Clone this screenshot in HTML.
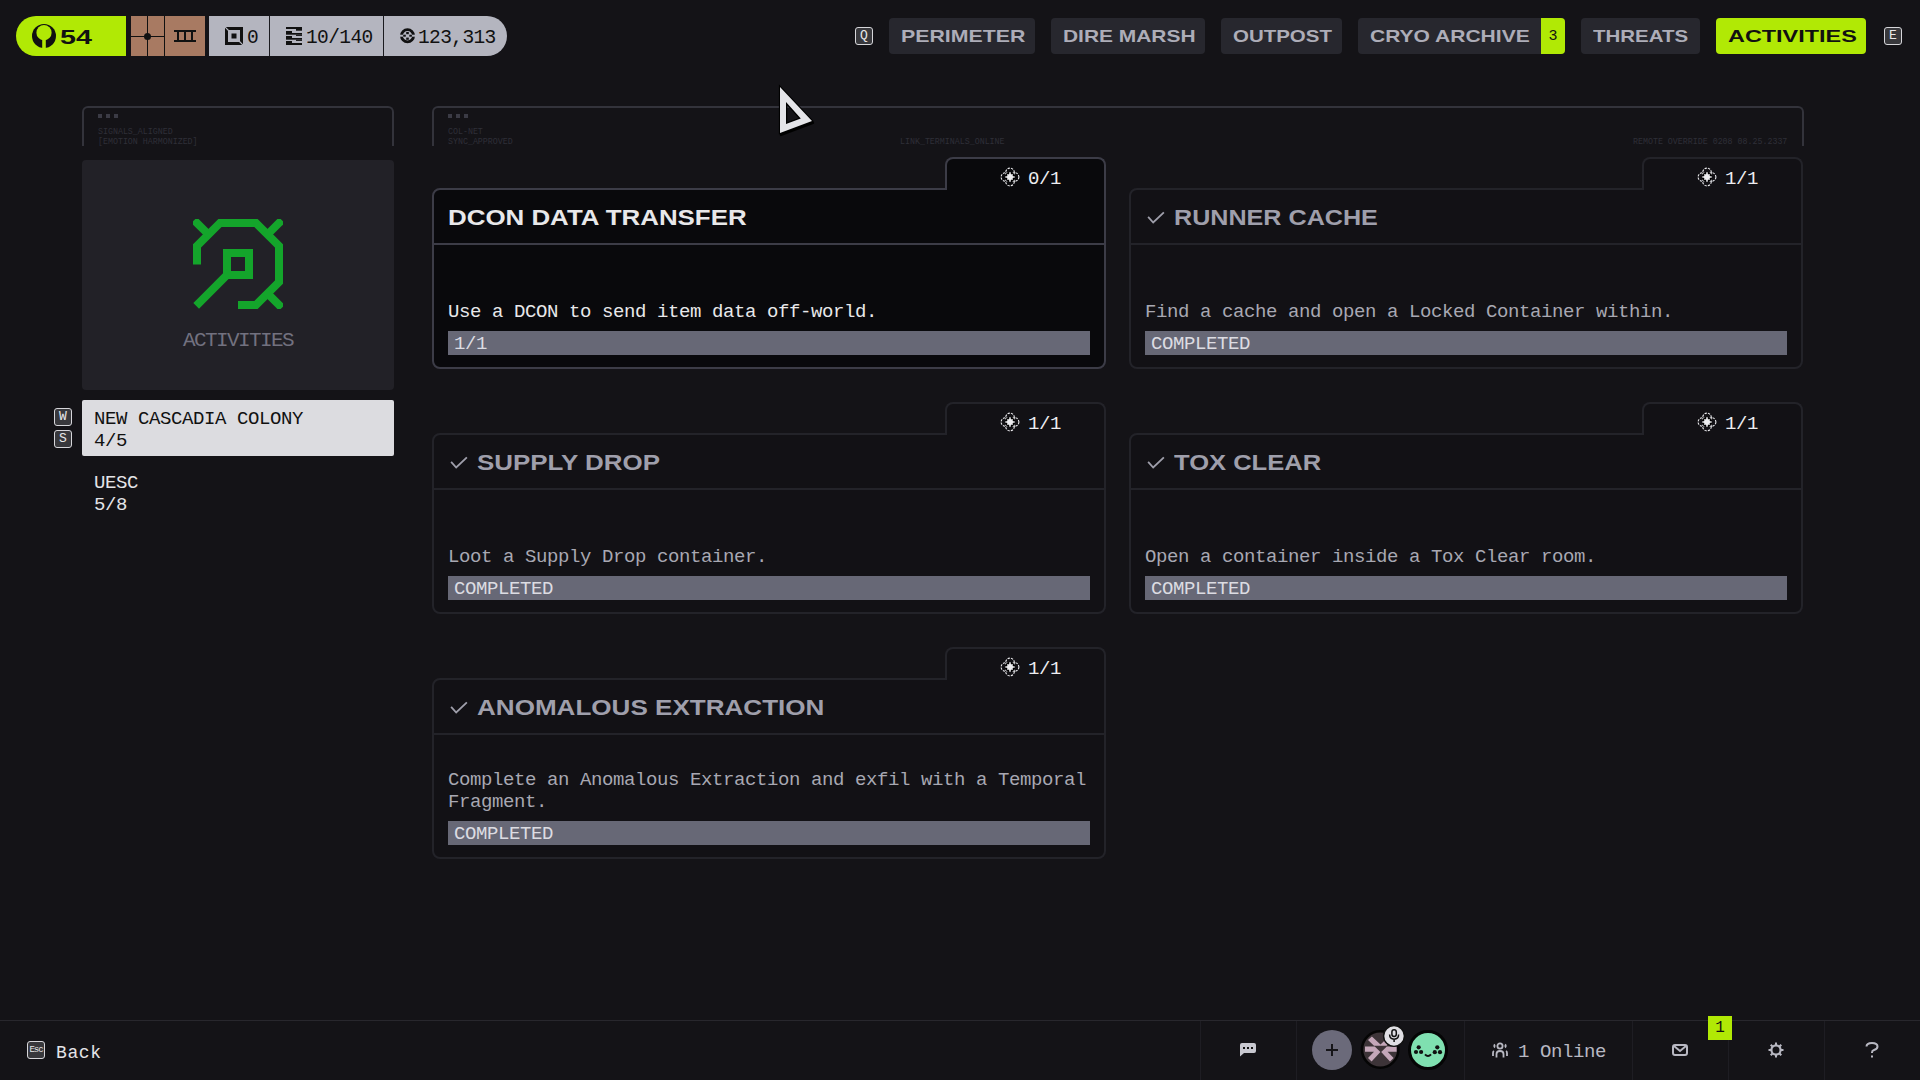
<!DOCTYPE html>
<html><head><meta charset="utf-8">
<style>
*{margin:0;padding:0;box-sizing:border-box}
html,body{width:1920px;height:1080px;overflow:hidden;background:#141317}
body{position:relative;font-family:"Liberation Mono",monospace;color:#e8e8ea}
.a{position:absolute}
.mono{font-family:"Liberation Mono",monospace}
.sans{font-family:"Liberation Sans",sans-serif;font-weight:bold}
.sx{display:inline-block;transform-origin:0 50%;white-space:pre}
/* top pill */
.pill{position:absolute;top:16px;height:40px}
/* nav tabs */
.tab{position:absolute;top:18px;height:36px;background:#27272e;border-radius:4px;color:#adadb8;font:bold 17px "Liberation Sans",sans-serif;line-height:36px;white-space:pre}
.tab span{position:absolute;top:1px}
.key{position:absolute;width:18px;height:18px;border:1.5px solid #d6d6da;border-radius:3px;background:#38383c;color:#e8e8ea;font:13px "Liberation Mono",monospace;line-height:15px;text-align:center}
/* frames */
.frame{position:absolute;top:106px;height:40px;border:2px solid #33333b;border-bottom:none;border-radius:6px 6px 0 0}
.ftxt{position:absolute;font:8.3px "Liberation Mono",monospace;color:#2f2f37;line-height:10px;white-space:pre}
.dots{position:absolute;top:114px;width:20px;height:4px;background:linear-gradient(90deg,#3b3b45 0 4px,transparent 4px 8px,#3b3b45 8px 12px,transparent 12px 16px,#3b3b45 16px 20px)}
/* cards */
.card{position:absolute;width:673.5px;height:211.5px}
.card .body{position:absolute;left:0;top:31px;width:673.5px;height:180.5px;border:2px solid #232329;border-radius:8px 0 8px 8px;background:#121115}
.card .tabr{position:absolute;right:0;top:0;width:161px;height:33px;border:2px solid #232329;border-bottom:none;border-radius:8px 8px 0 0;background:#121115}
.card .cover{position:absolute;right:2px;top:31px;width:157px;height:4px;background:#121115}
.card .hdiv{position:absolute;left:0;top:86px;width:673.5px;height:2px;background:#232329}
.card.act .body,.card.act .tabr,.card.act .cover{background:#09090c;border-color:#3c3c47}
.card.act .cover{background:#09090c}
.card.act .hdiv{background:#3c3c47}
.rew{position:absolute;top:10px;left:568px;width:20px;height:20px}
.rewt{position:absolute;top:10px;left:596px;font:19px "Liberation Mono",monospace;letter-spacing:-0.4px;color:#ededf0;line-height:20px;white-space:pre}
.ttl{position:absolute;top:53px;font:bold 21.5px "Liberation Sans",sans-serif;line-height:24px;color:#9f9fab;white-space:pre}
.card.act .ttl{color:#e8e8ea}
.chk{position:absolute;left:16px;top:54px;width:18px;height:14px}
.desc{position:absolute;left:16px;width:650px;font:19px "Liberation Mono",monospace;letter-spacing:-0.4px;line-height:22px;color:#a8a8b2;white-space:pre}
.card.act .desc{color:#e8e8ea}
.bar{position:absolute;left:16px;top:174px;width:642px;height:24px;background:#676876;color:#dcdce2;font:19px "Liberation Mono",monospace;letter-spacing:-0.4px;line-height:24px;padding-left:6px;padding-top:1px;white-space:pre}
/* bottom */
.bline{position:absolute;left:0;top:1020px;width:1920px;height:1px;background:#28272d}
.bdiv{position:absolute;top:1021px;width:1px;height:59px;background:#1e1d23}
</style></head><body>

<!-- ===== TOP LEFT PILL ===== -->
<div class="pill" style="left:16px;width:110px;background:#b1e905;border-radius:20px 0 0 20px"></div>
<svg class="a" style="left:32px;top:24px" width="24" height="24" viewBox="0 0 24 24">
  <circle cx="12" cy="12" r="12" fill="#111"/>
  <circle cx="12" cy="8.7" r="7.6" fill="#b1e905"/>
  <rect x="10.2" y="12" width="3.6" height="12.5" fill="#b1e905"/>
</svg>
<div class="a sans" style="left:60px;top:23px;font-size:20.5px;line-height:28px;color:#111"><span class="sx" style="transform:scaleX(1.40)">54</span></div>

<div class="pill" style="left:131px;width:74px;background:#a87a62"></div>
<div class="a" style="left:147px;top:16px;width:1px;height:40px;background:#111"></div>
<div class="a" style="left:131px;top:36px;width:33px;height:1px;background:#111"></div>
<div class="a" style="left:144px;top:33px;width:7px;height:7px;border-radius:50%;background:#111"></div>
<div class="a" style="left:164px;top:16px;width:1px;height:40px;background:#111"></div>
<svg class="a" style="left:174px;top:30px" width="22" height="12" viewBox="0 0 22 12">
  <rect x="0" y="0" width="22" height="2" fill="#111"/><rect x="0" y="10" width="22" height="2" fill="#111"/>
  <rect x="3" y="1" width="2" height="10" fill="#111"/><rect x="10" y="1" width="2" height="10" fill="#111"/><rect x="17" y="1" width="2" height="10" fill="#111"/>
</svg>

<div class="pill" style="left:209px;width:298px;background:#b4b5bf;border-radius:0 20px 20px 0"></div>
<div class="a" style="left:269px;top:16px;width:1px;height:40px;background:#1a1a1f"></div>
<div class="a" style="left:383px;top:16px;width:1px;height:40px;background:#1a1a1f"></div>
<svg class="a" style="left:225px;top:27px" width="18" height="18" viewBox="0 0 18 18">
  <path d="M0,0 H18 V18 H0z M3,3 V15 H15 V3z" fill="#111" fill-rule="evenodd"/>
  <rect x="6.5" y="6.5" width="5" height="5" fill="#111"/>
  <path d="M0,0 L3.5,3.5 M18,18 L14.5,14.5" stroke="#b4b5bf" stroke-width="1.2"/>
</svg>
<div class="a mono" style="left:247px;top:26.7px;font-size:19.5px;letter-spacing:-0.6px;line-height:22px;color:#111">0</div>
<svg class="a" style="left:286px;top:27px" width="16" height="18" viewBox="0 0 16 18">
  <g fill="#111">
  <rect x="0" y="0" width="16" height="2"/><rect x="10" y="2" width="6" height="1.7"/>
  <rect x="0" y="4" width="6" height="2"/><rect x="0" y="6" width="16" height="1.7"/><rect x="10" y="7.7" width="6" height="1.2"/>
  <rect x="0" y="9" width="6" height="2"/><rect x="0" y="11" width="16" height="1.7"/><rect x="10" y="12.7" width="6" height="1.2"/>
  <rect x="0" y="14" width="6" height="2"/><rect x="0" y="16" width="16" height="2"/>
  </g>
</svg>
<div class="a mono" style="left:306px;top:26.7px;font-size:19.5px;letter-spacing:-0.6px;line-height:22px;color:#111">10/140</div>
<svg class="a" style="left:399px;top:26px" width="18" height="20" viewBox="0 0 18 20">
  <circle cx="8.5" cy="9.7" r="6.1" fill="none" stroke="#111" stroke-width="2.8"/>
  <rect x="0" y="8.7" width="18" height="2" fill="#b4b5bf"/>
  <g fill="#111"><rect x="7.2" y="6" width="2.6" height="2.2"/><rect x="4.2" y="8.7" width="2.6" height="2"/><rect x="10.3" y="8.7" width="2.6" height="2"/><rect x="7.2" y="11.6" width="2.6" height="2.2"/></g>
</svg>
<div class="a mono" style="left:418px;top:26.7px;font-size:19.5px;letter-spacing:-0.6px;line-height:22px;color:#111">123,313</div>

<!-- ===== NAV TABS ===== -->
<div class="key" style="left:855px;top:27px">Q</div>
<div class="tab" style="left:889px;width:146px"><span style="left:12px;transform:scaleX(1.253)" class="sx">PERIMETER</span></div>
<div class="tab" style="left:1051px;width:154px"><span style="left:12px;transform:scaleX(1.231)" class="sx">DIRE MARSH</span></div>
<div class="tab" style="left:1221px;width:121px"><span style="left:12px;transform:scaleX(1.204)" class="sx">OUTPOST</span></div>
<div class="tab" style="left:1358px;width:207px"><span style="left:12px;transform:scaleX(1.237)" class="sx">CRYO ARCHIVE</span>
  <div class="a" style="left:183px;top:0;width:24px;height:36px;background:#b1e905;border-radius:0 4px 4px 0;color:#111;font:15px 'Liberation Mono',monospace;line-height:38px;text-align:center">3</div></div>
<div class="tab" style="left:1581px;width:119px"><span style="left:12px;transform:scaleX(1.204)" class="sx">THREATS</span></div>
<div class="tab" style="left:1716px;width:150px;background:#b1e905;color:#111"><span style="left:12px;transform:scaleX(1.377)" class="sx">ACTIVITIES</span></div>
<div class="key" style="left:1884px;top:27px">E</div>


<!-- ===== FRAMES ===== -->
<div class="frame" style="left:82px;width:312px"></div>
<div class="dots" style="left:98px"></div>
<div class="ftxt" style="left:98px;top:127px">SIGNALS_ALIGNED
[EMOTION HARMONIZED]</div>
<div class="frame" style="left:432px;width:1372px"></div>
<div class="dots" style="left:448px"></div>
<div class="ftxt" style="left:448px;top:127px">COL-NET
SYNC_APPROVED</div>
<div class="ftxt" style="left:900px;top:137px">LINK_TERMINALS_ONLINE</div>
<div class="ftxt" style="left:1633px;top:137px">REMOTE OVERRIDE 0208 08.25.2337</div>

<!-- ===== SIDEBAR ===== -->
<div class="a" style="left:82px;top:160px;width:312px;height:230px;background:#222127;border-radius:4px"></div>
<svg class="a" style="left:193px;top:219px" width="90" height="90" viewBox="0 0 90 90">
  <g fill="none" stroke="#14a52b" stroke-width="8" stroke-linecap="square" stroke-linejoin="miter">
    <path d="M4,41.5 V27 L27,4 H63 L86,27 V63 L63,86 H49"/>
    <path d="M4,4 L15,15 M86,4 L75,15 M86,86 L75,75"/>
    <rect x="34" y="34" width="22" height="22"/>
    <path d="M34,56 L6,84"/>
  </g>
</svg>
<div class="a mono" style="left:183px;top:330px;font-size:21px;line-height:22px;letter-spacing:-1.6px;color:#72717f">ACTIVITIES</div>

<div class="key" style="left:54px;top:408px">W</div>
<div class="key" style="left:54px;top:430px">S</div>
<div class="a" style="left:82px;top:400px;width:312px;height:56px;background:#dcdce0;border-radius:2px"></div>
<div class="a mono" style="left:94px;top:408px;font-size:19px;letter-spacing:-0.4px;line-height:22px;color:#111;white-space:pre">NEW CASCADIA COLONY
4/5</div>
<div class="a mono" style="left:94px;top:472px;font-size:19px;letter-spacing:-0.4px;line-height:22px;color:#e4e4e8;white-space:pre">UESC
5/8</div>

<!-- ===== CURSOR ===== -->
<svg class="a" style="left:776px;top:84px" width="44" height="56" viewBox="0 0 44 56">
  <path d="M4,3 L36,37 L4,49z M9,16 V38 L23.8,32.6z" fill="#000" fill-rule="evenodd" stroke="#000" stroke-width="2.4" stroke-linejoin="round" transform="translate(1,2)"/>
  <path d="M4,3 L36,37 L4,49z M10,18 V40 L24.8,34.6z" fill="none" stroke="#000" stroke-width="2.2" stroke-linejoin="miter"/>
  <path d="M4,3 L36,37 L4,49z M10,18 V40 L24.8,34.6z" fill="#e4e4e8" fill-rule="evenodd"/>
</svg>

<div class="card act" style="left:432px;top:157px">
  <div class="body"></div>
  <div class="tabr"></div>
  <div class="cover"></div>
  <div class="hdiv"></div>
  <svg class="rew" width="20" height="20" viewBox="0 0 20 20" style="left:568px;top:10px">
    <g fill="none" stroke="#ededf0" stroke-width="1.1" stroke-dasharray="2.3 1.15">
      <circle cx="10" cy="5.4" r="4.3"/><circle cx="10" cy="14.6" r="4.3"/><circle cx="5.4" cy="10" r="4.3"/><circle cx="14.6" cy="10" r="4.3"/>
    </g>
    <circle cx="10" cy="10" r="5" fill="#000"/>
    <circle cx="10" cy="10" r="3" fill="#ededf0"/>
    <path d="M10,5.3 V14.7 M5.3,10 H14.7" stroke="#ededf0" stroke-width="1.6"/>
    <path d="M7.4,7.4 L12.6,12.6 M12.6,7.4 L7.4,12.6" stroke="#ededf0" stroke-width="1.2"/>
  </svg>
  <div class="rewt" style="top:12px">0/1</div>
  
  <div class="ttl" style="left:15.5px;top:48.5px"><span class="sx" style="transform:scaleX(1.204)">DCON DATA TRANSFER</span></div>
  <div class="desc" style="top:144px">Use a DCON to send item data off-world.</div>
  <div class="bar">1/1</div>
</div>
<div class="card" style="left:1129px;top:157px">
  <div class="body"></div>
  <div class="tabr"></div>
  <div class="cover"></div>
  <div class="hdiv"></div>
  <svg class="rew" width="20" height="20" viewBox="0 0 20 20" style="left:568px;top:10px">
    <g fill="none" stroke="#ededf0" stroke-width="1.1" stroke-dasharray="2.3 1.15">
      <circle cx="10" cy="5.4" r="4.3"/><circle cx="10" cy="14.6" r="4.3"/><circle cx="5.4" cy="10" r="4.3"/><circle cx="14.6" cy="10" r="4.3"/>
    </g>
    <circle cx="10" cy="10" r="5" fill="#000"/>
    <circle cx="10" cy="10" r="3" fill="#ededf0"/>
    <path d="M10,5.3 V14.7 M5.3,10 H14.7" stroke="#ededf0" stroke-width="1.6"/>
    <path d="M7.4,7.4 L12.6,12.6 M12.6,7.4 L7.4,12.6" stroke="#ededf0" stroke-width="1.2"/>
  </svg>
  <div class="rewt" style="top:12px">1/1</div>
  <svg class="chk" viewBox="0 0 16 11" width="16" height="11" style="left:18px;top:54px"><path d="M1,4.5 L5.5,9.5 L15,0.5" fill="none" stroke="#9f9fab" stroke-width="1.6"/></svg>
  <div class="ttl" style="left:45px;top:48.5px"><span class="sx" style="transform:scaleX(1.169)">RUNNER CACHE</span></div>
  <div class="desc" style="top:144px">Find a cache and open a Locked Container within.</div>
  <div class="bar">COMPLETED</div>
</div>
<div class="card" style="left:432px;top:402px">
  <div class="body"></div>
  <div class="tabr"></div>
  <div class="cover"></div>
  <div class="hdiv"></div>
  <svg class="rew" width="20" height="20" viewBox="0 0 20 20" style="left:568px;top:10px">
    <g fill="none" stroke="#ededf0" stroke-width="1.1" stroke-dasharray="2.3 1.15">
      <circle cx="10" cy="5.4" r="4.3"/><circle cx="10" cy="14.6" r="4.3"/><circle cx="5.4" cy="10" r="4.3"/><circle cx="14.6" cy="10" r="4.3"/>
    </g>
    <circle cx="10" cy="10" r="5" fill="#000"/>
    <circle cx="10" cy="10" r="3" fill="#ededf0"/>
    <path d="M10,5.3 V14.7 M5.3,10 H14.7" stroke="#ededf0" stroke-width="1.6"/>
    <path d="M7.4,7.4 L12.6,12.6 M12.6,7.4 L7.4,12.6" stroke="#ededf0" stroke-width="1.2"/>
  </svg>
  <div class="rewt" style="top:12px">1/1</div>
  <svg class="chk" viewBox="0 0 16 11" width="16" height="11" style="left:18px;top:54px"><path d="M1,4.5 L5.5,9.5 L15,0.5" fill="none" stroke="#9f9fab" stroke-width="1.6"/></svg>
  <div class="ttl" style="left:45px;top:48.5px"><span class="sx" style="transform:scaleX(1.206)">SUPPLY DROP</span></div>
  <div class="desc" style="top:144px">Loot a Supply Drop container.</div>
  <div class="bar">COMPLETED</div>
</div>
<div class="card" style="left:1129px;top:402px">
  <div class="body"></div>
  <div class="tabr"></div>
  <div class="cover"></div>
  <div class="hdiv"></div>
  <svg class="rew" width="20" height="20" viewBox="0 0 20 20" style="left:568px;top:10px">
    <g fill="none" stroke="#ededf0" stroke-width="1.1" stroke-dasharray="2.3 1.15">
      <circle cx="10" cy="5.4" r="4.3"/><circle cx="10" cy="14.6" r="4.3"/><circle cx="5.4" cy="10" r="4.3"/><circle cx="14.6" cy="10" r="4.3"/>
    </g>
    <circle cx="10" cy="10" r="5" fill="#000"/>
    <circle cx="10" cy="10" r="3" fill="#ededf0"/>
    <path d="M10,5.3 V14.7 M5.3,10 H14.7" stroke="#ededf0" stroke-width="1.6"/>
    <path d="M7.4,7.4 L12.6,12.6 M12.6,7.4 L7.4,12.6" stroke="#ededf0" stroke-width="1.2"/>
  </svg>
  <div class="rewt" style="top:12px">1/1</div>
  <svg class="chk" viewBox="0 0 16 11" width="16" height="11" style="left:18px;top:54px"><path d="M1,4.5 L5.5,9.5 L15,0.5" fill="none" stroke="#9f9fab" stroke-width="1.6"/></svg>
  <div class="ttl" style="left:45px;top:48.5px"><span class="sx" style="transform:scaleX(1.188)">TOX CLEAR</span></div>
  <div class="desc" style="top:144px">Open a container inside a Tox Clear room.</div>
  <div class="bar">COMPLETED</div>
</div>
<div class="card" style="left:432px;top:647px">
  <div class="body"></div>
  <div class="tabr"></div>
  <div class="cover"></div>
  <div class="hdiv"></div>
  <svg class="rew" width="20" height="20" viewBox="0 0 20 20" style="left:568px;top:10px">
    <g fill="none" stroke="#ededf0" stroke-width="1.1" stroke-dasharray="2.3 1.15">
      <circle cx="10" cy="5.4" r="4.3"/><circle cx="10" cy="14.6" r="4.3"/><circle cx="5.4" cy="10" r="4.3"/><circle cx="14.6" cy="10" r="4.3"/>
    </g>
    <circle cx="10" cy="10" r="5" fill="#000"/>
    <circle cx="10" cy="10" r="3" fill="#ededf0"/>
    <path d="M10,5.3 V14.7 M5.3,10 H14.7" stroke="#ededf0" stroke-width="1.6"/>
    <path d="M7.4,7.4 L12.6,12.6 M12.6,7.4 L7.4,12.6" stroke="#ededf0" stroke-width="1.2"/>
  </svg>
  <div class="rewt" style="top:12px">1/1</div>
  <svg class="chk" viewBox="0 0 16 11" width="16" height="11" style="left:18px;top:54px"><path d="M1,4.5 L5.5,9.5 L15,0.5" fill="none" stroke="#9f9fab" stroke-width="1.6"/></svg>
  <div class="ttl" style="left:45px;top:48.5px"><span class="sx" style="transform:scaleX(1.212)">ANOMALOUS EXTRACTION</span></div>
  <div class="desc" style="top:122px">Complete an Anomalous Extraction and exfil with a Temporal
Fragment.</div>
  <div class="bar">COMPLETED</div>
</div>
<!-- ===== BOTTOM BAR ===== -->
<div class="bline"></div>
<div class="key" style="left:27px;top:1041px;font-size:9px;letter-spacing:-1px;line-height:16px">Esc</div>
<div class="a mono" style="left:56px;top:1042px;font-size:18px;letter-spacing:0.6px;line-height:22px;color:#e4e4e8">Back</div>
<div class="bdiv" style="left:1200px"></div>
<div class="bdiv" style="left:1296px"></div>
<div class="bdiv" style="left:1464px"></div>
<div class="bdiv" style="left:1632px"></div>
<div class="bdiv" style="left:1728px"></div>
<div class="bdiv" style="left:1824px"></div>
<svg class="a" style="left:1240px;top:1043px" width="16" height="14" viewBox="0 0 16 14">
  <path d="M2,0 H14 Q16,0 16,2 V8 Q16,10 14,10 H4 L0,13.5 V2 Q0,0 2,0z" fill="#c8c8d0"/>
  <rect x="3" y="4" width="2" height="2" fill="#111"/><rect x="7" y="4" width="2" height="2" fill="#111"/><rect x="11" y="4" width="2" height="2" fill="#111"/>
</svg>
<div class="a" style="left:1312px;top:1030px;width:40px;height:40px;border-radius:50%;background:#6b6a7a"></div>
<div class="a" style="left:1326px;top:1049px;width:12px;height:2px;background:#161519"></div>
<div class="a" style="left:1331px;top:1044px;width:2px;height:12px;background:#161519"></div>
<svg class="a" style="left:1360px;top:1030px" width="40" height="40" viewBox="0 0 40 40">
  <circle cx="20.2" cy="19.5" r="18.2" fill="#3d3438" stroke="#050505" stroke-width="2.6"/>
  <g fill="#c4a7b9">
    <path d="M5,16.5 H14.8 L20.4,22 L11.6,31.5 L8,28 L14,21.8 H5z"/>
    <path d="M36.6,16.5 H26.8 L21.2,22 L30,31.5 L33.6,28 L27.6,21.8 H36.6z"/>
    <path d="M8,10 L11.9,6.4 L20.5,14.6 L28.9,6.4 L32.6,10 L26.5,15.8 H14z"/>
  </g>
</svg>
<svg class="a" style="left:1382px;top:1024px" width="24" height="24" viewBox="0 0 24 24">
  <circle cx="12" cy="12" r="10.4" fill="#e0dfe4" stroke="#111" stroke-width="1.4"/>
  <rect x="9.9" y="5.8" width="4.4" height="6.6" rx="2.2" fill="none" stroke="#111" stroke-width="1.5"/>
  <path d="M7.6,10.6 Q7.6,15.2 12.1,15.2 Q16.6,15.2 16.6,10.6 M12.1,15.2 V18" fill="none" stroke="#111" stroke-width="1.5"/>
</svg>
<svg class="a" style="left:1408px;top:1030px" width="40" height="40" viewBox="0 0 40 40">
  <circle cx="20" cy="20" r="18.5" fill="#7fe0b0" stroke="#050505" stroke-width="3"/>
  <g fill="#111">
    <circle cx="10.7" cy="17.3" r="2.1"/><circle cx="8" cy="22" r="2.1"/><circle cx="13.1" cy="22" r="2.1"/>
    <circle cx="29.3" cy="17.3" r="2.1"/><circle cx="26.8" cy="22.2" r="2.1"/><circle cx="32" cy="22.2" r="2.1"/>
  </g>
  <path d="M17,24.3 Q20,27.8 23,24.3" fill="none" stroke="#111" stroke-width="2"/>
</svg>
<svg class="a" style="left:1492px;top:1042px" width="16" height="16" viewBox="0 0 16 16">
  <g fill="none" stroke="#b8b8c2" stroke-width="1.8">
    <circle cx="8" cy="4" r="2.6"/>
    <path d="M4.5,15.5 V12 Q4.5,9 8,9 Q11.5,9 11.5,12 V15.5"/>
    <path d="M3,2.5 Q1.5,4 3,5.5 M13,2.5 Q14.5,4 13,5.5"/>
    <path d="M1,14 V11 Q1,9.5 2,9 M15,14 V11 Q15,9.5 14,9"/>
  </g>
</svg>
<div class="a mono" style="left:1518px;top:1041px;font-size:19px;letter-spacing:-0.4px;line-height:22px;color:#b8b8c2;white-space:pre">1 Online</div>
<svg class="a" style="left:1672px;top:1044px" width="16" height="12" viewBox="0 0 16 12">
  <rect x="1" y="1" width="14" height="10" rx="2" fill="none" stroke="#b8b8c2" stroke-width="2"/>
  <path d="M2,2 L8,7 L14,2" fill="none" stroke="#b8b8c2" stroke-width="2"/>
</svg>
<div class="a" style="left:1708px;top:1016px;width:24px;height:24px;background:#b1e905;color:#111;font:16px 'Liberation Mono',monospace;line-height:24px;text-align:center">1</div>
<svg class="a" style="left:1768px;top:1042px" width="16" height="16" viewBox="0 0 16 16">
  <circle cx="8" cy="8" r="4.6" fill="none" stroke="#b8b8c2" stroke-width="2.2"/>
  <path d="M8,0.5 V3 M8,13 V15.5 M0.5,8 H3 M13,8 H15.5 M2.7,2.7 L4.5,4.5 M11.5,11.5 L13.3,13.3 M13.3,2.7 L11.5,4.5 M4.5,11.5 L2.7,13.3" stroke="#b8b8c2" stroke-width="2"/>
</svg>
<svg class="a" style="left:1865px;top:1042px" width="14" height="16" viewBox="0 0 14 16">
  <path d="M1.5,4.5 Q1.5,1 7,1 Q12.5,1 12.5,4.5 Q12.5,7 9,8 Q7,8.6 7,10.5 V11" fill="none" stroke="#b8b8c2" stroke-width="2"/>
  <rect x="6" y="13.5" width="2" height="2" fill="#b8b8c2"/>
</svg>

</body></html>
